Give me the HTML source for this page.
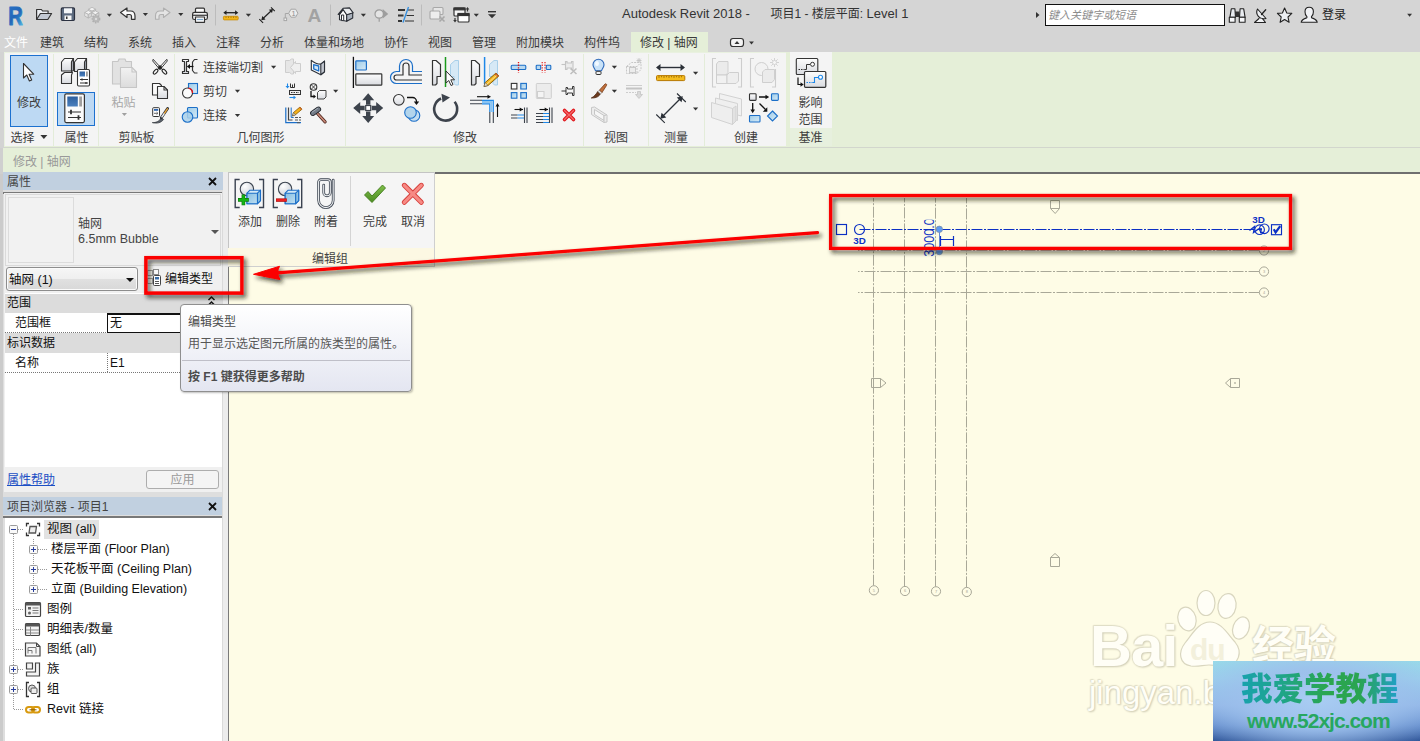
<!DOCTYPE html>
<html lang="zh-CN">
<head>
<meta charset="utf-8">
<title>Autodesk Revit 2018 - 项目1 - 楼层平面: Level 1</title>
<style>
html,body{margin:0;padding:0;}
body{width:1420px;height:741px;overflow:hidden;position:relative;background:#d5d5d5;
 font-family:"Liberation Sans","Noto Sans CJK SC",sans-serif;font-size:12px;color:#333;}
.abs{position:absolute;}
div,span,a{position:absolute;white-space:nowrap;box-sizing:border-box;}
svg{position:absolute;overflow:visible;}
/* ---------- title / tabs ---------- */
#titlebar{left:0;top:0;width:1420px;height:52px;background:#d5d5d5;}
.tab{top:34px;height:19px;line-height:19px;font-size:12px;color:#3a3a3a;}
#title{left:622px;top:5px;height:18px;line-height:18px;font-size:13px;color:#333;}
/* ---------- ribbon ---------- */
#ribbon{left:0;top:52px;width:1420px;height:96px;background:#e5efd8;}
.panel{top:0;height:95px;background:#f4f4f4;}
.ptitle{top:76px;height:19px;line-height:19px;text-align:center;font-size:12px;color:#444;}
.sep{top:2px;width:1px;height:92px;background:#dfe8d5;}
.rl{font-size:12px;color:#3c3c3c;height:16px;line-height:16px;}
.dd{width:0;height:0;border-left:3px solid transparent;border-right:3px solid transparent;border-top:3px solid #444;}
#optbar{left:0;top:148px;width:1420px;height:25px;background:#e5efd8;}
/* ---------- left panels ---------- */
.ptl{left:3px;width:220px;height:18px;background:#c1d0e0;line-height:18px;font-size:12px;color:#444;}
.row{left:5px;width:217px;}
.tl{height:18px;line-height:18px;font-size:12.5px;color:#111;}
#left span,#left a,#tip span,#egrp span{margin-top:1px;}
#left span.tl{margin-top:-1.500px;}
/* ---------- drawing ---------- */
#draw{left:229px;top:174px;width:1191px;height:567px;background:#fefce6;}
</style>
</head>
<body>
<!-- TITLE BAR -->
<div id="titlebar">
  <div id="title"><span id="t1" style="left:0;top:0;">Autodesk Revit 2018 -</span><span id="t2" style="left:148.500px;top:0;font-size:12px;">项目1 - 楼层平面: <span style="position:static;font-size:13px;">Level 1</span></span></div>
</div>
<!-- TABS -->
<div id="tabs" style="left:0;top:0;width:1420px;height:52px;">
  <div class="tab" style="left:4px;color:#fff;">文件</div>
  <div class="tab" style="left:40px;">建筑</div>
  <div class="tab" style="left:84px;">结构</div>
  <div class="tab" style="left:128px;">系统</div>
  <div class="tab" style="left:172px;">插入</div>
  <div class="tab" style="left:216px;">注释</div>
  <div class="tab" style="left:260px;">分析</div>
  <div class="tab" style="left:304px;">体量和场地</div>
  <div class="tab" style="left:384px;">协作</div>
  <div class="tab" style="left:428px;">视图</div>
  <div class="tab" style="left:472px;">管理</div>
  <div class="tab" style="left:516px;">附加模块</div>
  <div class="tab" style="left:584px;">构件坞</div>
  <div style="left:631px;top:32px;width:77px;height:20px;background:#e5efd8;"></div>
  <div class="tab" style="left:640px;">修改 | 轴网</div>
</div>
<svg id="qat" style="left:0;top:0;" width="1420" height="52" viewBox="0 0 1420 52"><defs><linearGradient id="rg" x1="0.200" y1="0" x2="0.800" y2="1"><stop offset="0" stop-color="#2a72c6"/><stop offset="0.500" stop-color="#2167b8"/><stop offset="0.750" stop-color="#2f86c8"/><stop offset="1" stop-color="#5cbcea"/></linearGradient></defs><text x="8.300" y="24.600" font-family="Liberation Sans, sans-serif" font-weight="bold" font-size="25.500" fill="url(#rg)" stroke="url(#rg)" stroke-width="0.900" stroke-linejoin="round" textLength="14.600" lengthAdjust="spacingAndGlyphs">R</text><g stroke="#333" stroke-width="1.200" stroke-linejoin="round"><path d="M36.600 19.500V9.500h4.800l1.200 1.500h5.500v2.500" fill="#eceff3"/><path d="M36.600 19.500l3.800-6h11.200l-3.800 6z" fill="#c3c9d3"/></g><g><rect x="61.300" y="7.900" width="13.200" height="12.600" rx="1.200" fill="#5d6b80" stroke="#2b3140" stroke-width="1.200"/><rect x="64" y="8.300" width="8" height="5" fill="#f3f5f8"/><rect x="64.500" y="15.500" width="7" height="4.500" fill="#f5f5f5"/><rect x="66" y="16.500" width="1.500" height="2.500" fill="#333"/></g><g stroke="#b2b2b2" stroke-width="0.800" stroke-linejoin="round"><path d="M92 7.3l3.6 1.980l-3.6 1.980l-3.6-1.980z" fill="#f2f2f2"/><path d="M88.4 9.28l3.6 1.980v3.6l-3.6-1.980z" fill="#e4e4e4"/><path d="M95.6 9.28l-3.6 1.980v3.6l3.6-1.980z" fill="#d6d6d6"/><path d="M88.3 10.5l3.6 1.980l-3.6 1.980l-3.6-1.980z" fill="#f2f2f2"/><path d="M84.7 12.48l3.6 1.980v3.6l-3.6-1.980z" fill="#e4e4e4"/><path d="M91.899 12.48l-3.6 1.980v3.6l3.6-1.980z" fill="#d6d6d6"/><path d="M95.3 10.8l3.6 1.980l-3.6 1.980l-3.6-1.980z" fill="#f2f2f2"/><path d="M91.7 12.780l3.6 1.980v3.6l-3.6-1.980z" fill="#e4e4e4"/><path d="M98.899 12.780l-3.6 1.980v3.6l3.6-1.980z" fill="#d6d6d6"/></g><g><circle cx="96" cy="19" r="3.600" fill="#b9b9b9" stroke="#b0b0b0" stroke-width="1.600" stroke-dasharray="1.400 1.200"/><circle cx="96" cy="19" r="1.200" fill="#dcdcdc"/></g><path d="M106.800 13.7h5.2l-2.6 3z" fill="#333"/><path d="M120.500 12.500l6.500-4.500v3h3.500c3 0 4.500 2 4.500 5v3.300h-3.500v-2.800c0-1.500-.5-2-2-2h-2.500v3z" fill="#fafafa" stroke="#333" stroke-width="1.200" stroke-linejoin="round"/><path d="M142.8 13.1h5.2l-2.6 3z" fill="#333"/><path d="M170 12.500l-6.500-4.500v3h-3.500c-3 0-4.500 2-4.500 5v3.300h3.500v-2.800c0-1.500.5-2 2-2h2.500v3z" fill="#e4e4e4" stroke="#b0b0b0" stroke-width="1.100" stroke-linejoin="round"/><path d="M178.200 13.1h5.2l-2.6 3z" fill="#333"/><g stroke="#333" stroke-width="1.200" stroke-linejoin="round"><rect x="195.500" y="8.200" width="9" height="5" rx="1" fill="#fafafa"/><rect x="192.600" y="12.300" width="14.800" height="7.200" rx="1.800" fill="#f1f1f1"/><rect x="195.500" y="17" width="9" height="5.300" fill="#fff"/></g><path d="M197 19.500h6" stroke="#7aa6cc" stroke-width="1.300"/><path d="M193 15.300h14" stroke="#444" stroke-width="1.300"/><path d="M215.500 4.500v21M330.500 4.500v21M421.500 4.500v21" stroke="#bcbcbc" stroke-width="1"/><g stroke="#222" stroke-width="1.300" fill="#222"><path d="M225 12.700h11.500"/><path d="M223.300 12.700l3.200-2.400v4.800zM238.300 12.700l-3.200-2.400v4.800z" stroke="none"/></g><rect x="223.400" y="16.300" width="14.800" height="3.600" rx="0.800" fill="#f2b41a" stroke="#c98a00" stroke-width="0.800"/><path d="M226 16.500v1.500M228.500 16.500v1.500M231 16.500v1.500M233.500 16.500v1.500M236 16.500v1.500" stroke="#8a5f00" stroke-width="0.600"/><path d="M245.8 13.7h5.2l-2.6 3z" fill="#333"/><g stroke="#222" stroke-width="1.200" fill="#222"><path d="M262.500 19l9.300-8.800"/><path d="M259.300 19.200l3.800 3.600M271 7.400l3.800 3.700" stroke-width="1.100"/><path d="M261.300 20.300l1-4.200l3.200 3.300zM273 8.900l-1 4.200l-3.200-3.300z" stroke="none"/></g><g stroke="#a6a6a6" stroke-width="1" fill="#e9e9e9"><path d="M285.300 18v-4.500h3.500" fill="none"/><rect x="284" y="18" width="2.600" height="2.600" fill="#f0f0f0"/><path d="M288.700 13.200l2.300-4h4.600l2.300 4l-2.300 4h-4.600z" fill="#ececec"/></g><text x="291.400" y="15.800" font-family="Liberation Sans, sans-serif" font-size="7.500" fill="#8e8e8e">1</text><text x="307.600" y="21.800" font-family="Liberation Sans, sans-serif" font-weight="bold" font-size="19" fill="#a2a2a2">A</text><g stroke="#2b2f36" stroke-width="1.100" stroke-linejoin="round"><path d="M339.500 14.300l3.700-4.800l3.500 5.200v6.600l-7.200-1.600z" fill="#fbfbfb"/><path d="M346.700 14.700l6-1.900v5.300l-6 3.200z" fill="#a9b1bc"/><path d="M338.200 14.400l4.900-6.100l6.400-.4l3.700 4.900l-6.500 2l-3.600-5.300l-3.600 4.800z" fill="#e9ebee"/><rect x="341.500" y="15" width="2.200" height="5.600" fill="#fff" stroke-width="1"/></g><path d="M360.799 13.7h5.2l-2.6 3z" fill="#333"/><g stroke="#9c9c9c" stroke-width="1.200" fill="#e4e4e4"><path d="M382.700 9l5.500 4.900l-5.500 4.700z" fill="#9e9e9e" stroke="none"/><circle cx="379.200" cy="14" r="4.200"/><path d="M379.200 18.200v3.500"/></g><g stroke="#333" stroke-width="2"><path d="M398 10h7M398 15.500h5.500M398 21h4"/></g><g stroke="#333" stroke-width="1"><path d="M408 10h6M406.500 15.500h7.500M405 21h9"/></g><path d="M408.500 7l-5.500 15.500" stroke="#2f8de0" stroke-width="1.300"/><g stroke="#a8a8a8" stroke-width="1.100" fill="#e6e6e6"><rect x="433" y="7.500" width="10" height="7" rx="1"/><rect x="430" y="11" width="10" height="8" rx="1" fill="#ededed"/><path d="M439.500 16.500l5 5M444.500 16.500l-5 5" stroke-width="1.600"/></g><g stroke="#333" stroke-width="1.200" fill="#f6f6f6"><rect x="454" y="8" width="11" height="8" rx="1"/><rect x="458" y="13.500" width="11" height="8.500" rx="1" fill="#fff"/><rect x="458" y="13.500" width="11" height="2" fill="#333"/><rect x="454" y="8" width="11" height="1.800" fill="#333"/><path d="M467.500 8.500v3M455 18v3" fill="none"/></g><path d="M467.500 7l-1.800 2.500h3.600zM455 22.500l-1.800-2.500h3.600z" fill="#333"/><path d="M473.7 13.7h5.2l-2.6 3z" fill="#333"/><path d="M488 11.700h8" stroke="#333" stroke-width="1.400"/><path d="M488 14.200h8l-4 4z" fill="#333"/><rect x="730.500" y="38.500" width="13" height="8" rx="2.500" fill="#f4f4f4" stroke="#333" stroke-width="1.200"/><path d="M734.500 44h5l-2.500-3z" fill="#333"/><path d="M749.1 41.5h4.8l-2.4 3z" fill="#333"/><path d="M1036 12l3.500 3l-3.500 3z" fill="#333"/><rect x="1045.500" y="4.500" width="179" height="21" fill="#fff" stroke="#111" stroke-width="1"/><g stroke="#222" stroke-width="1.100" stroke-linejoin="round"><path d="M1231.300 8.800h3.600l.6 8.500h-5.600z" fill="#e9ecf0"/><path d="M1229.300 17.300h5.800v5h-5.800z" fill="#f6f7f9"/><path d="M1240.100 8.800h3.600l1.400 8.500h-5.600z" fill="#e9ecf0"/><path d="M1239.300 17.300h5.800v5h-5.800z" fill="#f6f7f9"/><rect x="1235" y="11.500" width="4.400" height="5.500" fill="#333" stroke="none"/></g><g stroke="#222" stroke-width="1.100" stroke-linejoin="round" stroke-linecap="round"><path d="M1257.500 9c-2.500 5 2 11.500 8.500 9.500z" fill="#eef0f3"/><path d="M1261.500 14.500l4.200-4.800" fill="none" stroke-width="1.300"/><path d="M1259 18.500l-4.500 4h11l-3-3.800" fill="#f2f3f5"/></g><path d="M1284.600 8l2.200 5l5 .4l-3.800 3.600l1.100 5.300l-4.500-2.800l-4.500 2.800l1.100-5.300l-3.800-3.600l5-.4z" fill="#eceff3" stroke="#222" stroke-width="1.100" stroke-linejoin="round"/><g stroke="#222" stroke-width="1.100" stroke-linejoin="round"><path d="M1301.200 22.300c.3-2.800 2.600-3.400 5.300-4.400c.6-.3.600-1 .2-1.500c-1.200-1.200-1.700-2.800-1.700-4.600c0-2.700 1.600-4.500 4.200-4.500s4.200 1.800 4.200 4.500c0 1.800-.5 3.400-1.700 4.600c-.4.500-.4 1.200.2 1.500c2.700 1 5 1.600 5.300 4.400z" fill="#f1f2f5"/></g><path d="M1407.200 13.7h4.8l-2.4 3z" fill="#333"/></svg><span style="left:1048px;top:7px;height:16px;line-height:16px;font-size:11px;font-style:italic;color:#8c8c8c;">键入关键字或短语</span><span style="left:1322px;top:7px;height:16px;line-height:16px;font-size:12px;color:#222;">登录</span>
<!-- RIBBON -->
<div id="ribbon">
  <div class="panel" id="pmain" style="left:4px;width:782px;border-top:1px solid #e9f1e0;border-left:1px solid #e9f1e0;height:94px;"></div>
  <div class="panel" id="pdatum" style="left:790px;width:42px;height:94px;"></div>
  <div style="left:790px;top:76px;width:42px;height:18px;background:#e7f0de;"></div>
  <div style="left:0;top:0;width:4px;height:96px;background:#d3d3d3;z-index:5;"></div>
  <div style="left:0;top:96px;width:3px;height:26px;background:#cfcfcf;z-index:5;"></div>
  <div style="left:3px;top:95px;width:1417px;height:1px;background:#d2d6cd;"></div>
  <svg id="ribsvg" style="left:0;top:0;" width="832" height="96" viewBox="0 52 832 96"><defs>
<linearGradient id="gq" x1="0" y1="0" x2="0" y2="1"><stop offset="0" stop-color="#fdfdfd"/><stop offset="1" stop-color="#d9dbe0"/></linearGradient>
<linearGradient id="gb" x1="0" y1="0" x2="1" y2="1"><stop offset="0" stop-color="#9ccbe8"/><stop offset="1" stop-color="#d8ebf7"/></linearGradient>
<linearGradient id="gd" x1="0" y1="0" x2="0" y2="1"><stop offset="0" stop-color="#f2f2f2"/><stop offset="1" stop-color="#dcdcdc"/></linearGradient>
<linearGradient id="gn" x1="0" y1="0" x2="0" y2="1"><stop offset="0" stop-color="#2d5f9e"/><stop offset="1" stop-color="#4b80bd"/></linearGradient>
</defs><path d="M53.5 54V146" stroke="#e3ecd9" stroke-width="1"/><path d="M98.5 54V146" stroke="#e3ecd9" stroke-width="1"/><path d="M174.5 54V146" stroke="#e3ecd9" stroke-width="1"/><path d="M345.5 54V146" stroke="#e3ecd9" stroke-width="1"/><path d="M583.5 54V146" stroke="#e3ecd9" stroke-width="1"/><path d="M648.5 54V146" stroke="#e3ecd9" stroke-width="1"/><path d="M704.5 54V146" stroke="#e3ecd9" stroke-width="1"/><rect x="10.500" y="55.500" width="37" height="71" fill="#bdd9f3" stroke="#1c71cf" stroke-width="1"/><path d="M23.500 63.500v14.500l3.300-3l2.600 6l2.300-1l-2.600-5.800h4.600z" fill="#fff" stroke="#333" stroke-width="1.100" stroke-linejoin="round"/><path d="M40.4 135.0h7.0l-3.5 4z" fill="#333"/><g stroke="#333" stroke-width="1.100" stroke-linejoin="round"><path d="M61.500 62l3-3.500h9l-2 3.500v9h-10z" fill="url(#gq)"/><path d="M74.500 62l3-3.500h9v10l-2 3h-10z" fill="url(#gq)"/><path d="M86.500 58.500v10l-2 3v-9.500z" fill="#9aa0aa"/><path d="M61.500 75l3-2.500h8l-1 2.500v8.500h-10z" fill="url(#gq)"/><path d="M71.500 62l2-3.500v12l-2 1z" fill="#aeb3bc"/><rect x="77.500" y="69.500" width="12" height="16.500" rx="1.200" fill="#fff"/></g><rect x="79.500" y="71.500" width="5.500" height="5" fill="url(#gn)"/><rect x="86" y="71.500" width="1.800" height="5" fill="#9a9a9a"/><path d="M80 79.500h8M80 83h8" stroke="#333" stroke-width="1"/><path d="M82 78.500v2M86 82v2" stroke="#333" stroke-width="1.300"/><rect x="57.500" y="92.500" width="37" height="33" fill="#bdd9f3" stroke="#1c71cf" stroke-width="1"/><rect x="64.800" y="93.800" width="19.600" height="28.800" rx="1.500" fill="#fbfbfb" stroke="#333" stroke-width="1.200"/><rect x="67.300" y="96.500" width="10.500" height="10" fill="url(#gn)"/><rect x="79.200" y="96.500" width="2.800" height="10" fill="#a0a0a0"/><path d="M68 112h13M68 117.500h13" stroke="#333" stroke-width="1.100"/><path d="M71 109.800v4.400M78.500 115.300v4.400" stroke="#333" stroke-width="1.800"/><g stroke="#c6c6c6" stroke-width="1.100" stroke-linejoin="round"><path d="M112.500 61.500h5.500l1-2.500h6l1 2.500h5.500v22.500h-19z" fill="#e2e2e2"/><path d="M120.500 67.500h11.500l4.500 4.500v15.500h-16z" fill="url(#gd)"/><path d="M132 67.500v4.500h4.500" fill="none"/></g><path d="M121.800 113.0h5.2l-2.6 3z" fill="#a0a0a0"/><g stroke="#222" stroke-width="0.900" stroke-linejoin="round"><path d="M153.200 59.300l8.400 9.300l-2 .6l-6.900-8.200z" fill="#fdfdfd"/><path d="M166.800 59.300l-8.400 9.300l2 .6l6.900-8.200z" fill="#fdfdfd"/><ellipse cx="155.600" cy="71.700" rx="1.500" ry="3" transform="rotate(42 155.600 71.700)" fill="#f6f6f6" stroke-width="1.100"/><ellipse cx="164.400" cy="71.700" rx="1.500" ry="3" transform="rotate(-42 164.400 71.700)" fill="#f6f6f6" stroke-width="1.100"/><circle cx="160" cy="67.300" r="1.500" fill="#222"/></g><g stroke="#333" stroke-width="1.100" stroke-linejoin="round"><path d="M152.500 83.500h7l2 2v9.500h-9z" fill="#fafafa"/><path d="M157.500 86.500h6.500l3.500 3.500v8.500h-10z" fill="url(#gq)"/><path d="M164 86.500v3.500h3.500" fill="none"/></g><rect x="152.700" y="107.700" width="6.800" height="8.800" rx="0.800" fill="#fff" stroke="#333" stroke-width="1"/><rect x="154" y="109" width="4.200" height="1.800" fill="#2f66b0"/><path d="M154 113.300h3.500" stroke="#444" stroke-width="0.800"/><path d="M156.500 112l1.500 1.300l-1.500 1.300" stroke="#444" stroke-width="0.700" fill="none"/><path d="M152.300 122.600c3.500 .2 7-1.200 9-4.800l2.300 1.700c-2.500 3.300-6.500 4.300-11.300 3.100z" fill="#5a616b" stroke="#2a2e34" stroke-width="0.700"/><path d="M161.300 117.800l6.300-9.300" stroke="#2a2e34" stroke-width="2.800" stroke-linecap="round"/><path d="M161.600 117.400l3-4.400" stroke="#eef0f2" stroke-width="1.400"/><path d="M164.600 113l2.800-4.200" stroke="#e9a53c" stroke-width="1.400" stroke-linecap="round"/><g stroke="#333" stroke-width="1.200" fill="url(#gq)" stroke-linejoin="round"><path d="M182.500 59.500h6v2h-2v10h2v2h-6v-2h2v-10h-2z"/><path d="M197.500 59.500h-3l-2 2.500v8.500l2 2.500h3" fill="none"/></g><path d="M187.500 66.500h6" stroke="#111" stroke-width="1.200"/><path d="M187 66.500l3-2.500v5z" fill="#111"/><path d="M271.0 65.8h5.2l-2.6 3z" fill="#333"/><rect x="188.500" y="83.500" width="9" height="10" fill="url(#gb)" stroke="#1c6fc8" stroke-width="1.100"/><circle cx="187.500" cy="93" r="5" fill="#fbfbfb" stroke="#333" stroke-width="1.100"/><path d="M188.500 88.100a5 5 0 0 1 4 4.900" stroke="#e8121a" stroke-width="1.300" fill="none"/><path d="M234.9 89.7h5.2l-2.6 3z" fill="#333"/><rect x="187.500" y="107.500" width="10" height="10.500" rx="1" fill="url(#gb)" stroke="#1c6fc8" stroke-width="1.100"/><circle cx="187.500" cy="117" r="5.300" fill="#a9d0ea" fill-opacity="0.850" stroke="#1c6fc8" stroke-width="1.100"/><path d="M234.9 113.9h5.2l-2.6 3z" fill="#333"/><g stroke="#cdcdcd" stroke-width="1" fill="#e6e6e6" stroke-linejoin="round"><path d="M285.500 60.500h4l2-1.500h2v15h-2l-2-1.500h-4z"/><path d="M300.500 63.500v8h-5v2l-5-6l5-6v2z" fill="#efefef"/></g><g stroke="#2b3038" stroke-width="1.100" stroke-linejoin="round"><path d="M311.300 60.300q4.500 3.800 9.500 3.800l3.700-2.900v10.500l-3.700 3l-9.500-4.700z" fill="#f7f7f8"/><path d="M320.800 64.100l3.700-2.900v10.500l-3.700 3z" fill="#c2c7d0"/></g><path d="M313.700 64.600l5 1.400v5l-5-2.200z" fill="#cfe6f8" stroke="#1c6fc8" stroke-width="1.300" stroke-linejoin="round"/><g stroke="#333" stroke-width="1"><path d="M290.500 83.500v4h4v-4M292.500 84.500v3" fill="none"/><rect x="289.500" y="90.500" width="11" height="4" fill="#eee"/><path d="M291 92.500h8" stroke-dasharray="1.500 1"/></g><path d="M287.500 83.500v4" stroke="#1e88e8" stroke-width="1.100"/><path d="M285.500 86l2 2.500l2-2.500z" fill="#1e88e8"/><path d="M289.500 97.500h5" stroke="#1e88e8" stroke-width="1.100"/><path d="M293.500 95.500l2.500 2l-2.500 2z" fill="#1e88e8"/><g stroke="#333" stroke-width="1.100" fill="none"><circle cx="313.500" cy="87" r="3.300"/><path d="M311.200 84.700l4.600 4.600M315.800 84.700l-4.600 4.600" stroke-width="0.900"/><path d="M311 91v5.500h3" stroke="#111" stroke-width="1.300"/></g><path d="M313.500 94.500l2.500 2l-2.500 2z" fill="#111"/><path d="M317.500 92.500l2-2h6.500v6.500l-2 2h-6.500z" fill="url(#gq)" stroke="#444" stroke-width="1"/><path d="M333.099 89.7h5.2l-2.6 3z" fill="#333"/><path d="M285.800 107.500v15.200h15.200" stroke="#1c6fc8" stroke-width="1.200" fill="none"/><path d="M288.500 107.500v12.500h4" stroke="#444" stroke-width="1.200" fill="none"/><path d="M291.200 107.500v10h2.500" stroke="#1c6fc8" stroke-width="1" fill="none"/><path d="M295 117.500h6M295 120h6M297 122.700h4" stroke="#555" stroke-width="1" stroke-dasharray="3 1"/><path d="M292.500 116l1-3.500l6.500-5.500l2 2.200l-6.500 5.500z" fill="#f4b21c" stroke="#8a5a00" stroke-width="0.800" stroke-linejoin="round"/><path d="M292.500 116l1-3.500l2 2.200z" fill="#f3e2c0" stroke="#555" stroke-width="0.600"/><path d="M299 107.800l1-.8l2 2.200l-1 .8z" fill="#d06a30"/><g stroke-linecap="round"><path d="M317.300 113.300l7.800 8.600" stroke="#4a241c" stroke-width="3.200"/><path d="M317.300 113.300l7.800 8.600" stroke="#c98a78" stroke-width="1.600"/></g><g><path d="M312.800 113.200l5.600-3.900" stroke="#23272d" stroke-width="5.400" stroke-linecap="round"/><path d="M312.800 113.200l5.600-3.900" stroke="#727b87" stroke-width="3.800" stroke-linecap="round"/><path d="M312.300 112.100l5.400-3.800" stroke="#a3abb6" stroke-width="1" stroke-linecap="round"/></g><path d="M353.400 56.800V88" stroke="#111" stroke-width="1.300"/><rect x="355.800" y="60.800" width="10.600" height="9.200" rx="0.800" fill="url(#gb)" stroke="#1c6fc8" stroke-width="1.200"/><rect x="355.800" y="73.800" width="26" height="11.400" rx="0.800" fill="url(#gq)" stroke="#333" stroke-width="1.200"/><path d="M422 71.500h-9.500v-5.500a6.500 6.500 0 0 0 -13 0v5.500h-3a4.500 4.500 0 0 0 0 12h25.500" fill="none" stroke="#1c6fc8" stroke-width="1.200"/><path d="M422 75h-13v-9a3 3 0 0 0 -6 0v9h-6.500a1.800 1.800 0 0 0 0 5h25.500" fill="none" stroke="#333" stroke-width="1.200"/><path d="M432.500 60.500h3.500l4.500 4v12h-3.500v7l-1.500 1.500h-3z" fill="url(#gq)" stroke="#333" stroke-width="1.200" stroke-linejoin="round"/><path d="M458.500 60.500h-3.500l-4.500 4v12h3.500v7l1.500 1.500h3z" fill="#d6e9f6" stroke="#a8cfe9" stroke-width="1" stroke-linejoin="round"/><path d="M445.500 57V87" stroke="#1a9a1a" stroke-width="1.500"/><path d="M446 71v12l2.800-2.500l2.200 5l2-.9l-2.200-4.800h3.700z" fill="#fff" stroke="#333" stroke-width="1" stroke-linejoin="round"/><path d="M471.500 60.500h3.500l4.500 4v12h-3.500v7l-1.500 1.500h-3z" fill="url(#gq)" stroke="#333" stroke-width="1.200" stroke-linejoin="round"/><path d="M497.500 60.500h-3.500l-4.500 4v12h3.500v7l1.500 1.500h3z" fill="#d6e9f6" stroke="#a8cfe9" stroke-width="1" stroke-linejoin="round"/><path d="M484.600 57V84" stroke="#1e88e8" stroke-width="1.500"/><path d="M484 86.500l1.200-4l10.800-9.500l2.800 3l-10.800 9.500z" fill="#f6b820" stroke="#7a5200" stroke-width="0.900" stroke-linejoin="round"/><path d="M484 86.500l1.200-4l2.800 3z" fill="#f3e6cc" stroke="#555" stroke-width="0.600"/><path d="M494.500 74.200l1.500-1.300l2.800 3l-1.500 1.300z" fill="#c8622a"/><path d="M487 84l9.500-8.500" stroke="#fde9a8" stroke-width="0.800"/><g fill="#3d434c"><path d="M368.200 93.200l6 7h-3.800v4.500h-4.400v-4.500h-3.800z"/><path d="M368.200 122.900l6-7h-3.800v-4.500h-4.400v4.500h-3.800z"/><path d="M353.200 108l7-6v3.800h4.500v4.400h-4.500v3.800z"/><path d="M383.200 108l-7-6v3.800h-4.500v4.400h4.500v3.800z"/></g><rect x="365.700" y="105.500" width="5" height="5" fill="#fff" stroke="#3d434c" stroke-width="1.200"/><circle cx="398.800" cy="99.800" r="5.300" fill="url(#gq)" stroke="#333" stroke-width="1.100"/><circle cx="414" cy="115.500" r="5.800" fill="#c4def0" stroke="#1c6fc8" stroke-width="1.100"/><circle cx="410.500" cy="112.500" r="5.800" fill="#b3d5ec" stroke="#1c6fc8" stroke-width="1.100"/><path d="M407 97.500h5.500a4 4 0 0 1 4 4v1.500" fill="none" stroke="#111" stroke-width="1.300"/><path d="M413.800 101.500h5.400l-2.700 3.500z" fill="#111"/><path d="M454.600 101.800a11.500 11.500 0 1 1 -13.500 -3.300" fill="none" stroke="#3d434c" stroke-width="2.600"/><path d="M441.500 93.800l8.500 3.800l-7.500 5z" fill="#3d434c"/><path d="M470 100.300h12M470 103.800h12" stroke="#3d434c" stroke-width="1.100"/><path d="M489.800 123v-11M493.300 123v-11" stroke="#3d434c" stroke-width="1.100"/><path d="M482 100.300h11.300v11.700M482 103.800h7.800v8.200" stroke="#1e88e8" stroke-width="1.200" fill="none"/><path d="M482 102h9.500v10" stroke="#8cc4f0" stroke-width="2.200" fill="none"/><path d="M477 96.700h12" stroke="#111" stroke-width="1.100"/><path d="M487.500 94.700l3.500 2l-3.500 2z" fill="#111"/><path d="M497.500 117v-12" stroke="#111" stroke-width="1.100"/><path d="M495.500 106.500l2-3.500l2 3.500z" fill="#111"/><rect x="511.200" y="65.300" width="14.600" height="4.200" rx="1" fill="#b9d9f0" stroke="#1c6fc8" stroke-width="1.100"/><path d="M518.500 62v11" stroke="#e01010" stroke-width="1.300" stroke-dasharray="1.300 1.300"/><rect x="536.200" y="65.300" width="4.500" height="4.200" rx="0.800" fill="#b9d9f0" stroke="#1c6fc8" stroke-width="1.100"/><rect x="546.300" y="65.300" width="4.500" height="4.200" rx="0.800" fill="#b9d9f0" stroke="#1c6fc8" stroke-width="1.100"/><path d="M542.200 62v11M545 62v11" stroke="#e01010" stroke-width="1.100" stroke-dasharray="1.300 1.300"/><g stroke="#c4c4c4" stroke-width="1.100" fill="#ececec"><path d="M561.500 64.500h4"/><path d="M565.500 61.500h1.500v1.500h4.500v-1.500h1.500v8h-1.500v-1.500h-4.500v1.500h-1.500z"/><path d="M570.500 68.500l6 5.500M576.500 68.500l-6 5.500" stroke-width="1.500" stroke="#bdbdbd"/></g><rect x="511.300" y="83.400" width="5.600" height="5.600" fill="#fafafa" stroke="#333" stroke-width="1.100"/><rect x="520.800" y="83.400" width="5.600" height="5.600" fill="url(#gb)" stroke="#1c6fc8" stroke-width="1.100"/><rect x="511.300" y="92.600" width="5.600" height="5.600" fill="url(#gb)" stroke="#1c6fc8" stroke-width="1.100"/><rect x="520.800" y="92.600" width="5.600" height="5.600" fill="url(#gb)" stroke="#1c6fc8" stroke-width="1.100"/><rect x="536.300" y="83.500" width="15" height="15" rx="0.800" fill="#ececec" stroke="#cfcfcf" stroke-width="1"/><rect x="537.500" y="91.500" width="6.500" height="6" fill="#f4f4f4" stroke="#cfcfcf" stroke-width="1"/><g stroke="#222" stroke-width="0.900" fill="#f8f8f8"><path d="M561.500 91h4.500"/><path d="M566 87.500h1.500v1.500h5v-2.500h1.500v9h-1.500v-2.500h-5v1.500h-1.500z"/></g><path d="M514.500 109.500h8.500" stroke="#111" stroke-width="1.100"/><path d="M519.700 107.500l3.300 2l-3.300 2z" fill="#111"/><path d="M511 115h6.500M511 118h6.500" stroke="#3d434c" stroke-width="1.100"/><path d="M517.500 115h7M517.500 118h7" stroke="#1e88e8" stroke-width="1.200"/><path d="M524.500 107.500v15.500M527 107.500v15.500" stroke="#3d434c" stroke-width="1.100"/><path d="M539.500 109.500h8.500" stroke="#111" stroke-width="1.100"/><path d="M544.700 107.500l3.300 2l-3.300 2z" fill="#111"/><path d="M536 113.500h7M536 116.500h7M536 119.500h7M536 122.500h7" stroke="#3d434c" stroke-width="1.100"/><path d="M543 113.500h6.500M543 116.500h6.500M543 119.500h6.500M543 122.500h6.500" stroke="#1e88e8" stroke-width="1.200"/><path d="M549.500 107.500v15.500M552 107.500v15.500" stroke="#3d434c" stroke-width="1.100"/><path d="M564.500 110.500l9 9M573.500 110.500l-9 9" stroke="#e0161c" stroke-width="3.600" stroke-linecap="round"/><path d="M564.500 110.500l9 9M573.500 110.500l-9 9" stroke="#f56a6a" stroke-width="1.400" stroke-linecap="round"/><path d="M598.500 59.300a5.500 5.500 0 0 1 5.500 5.500c0 2.500-1.800 3.500-2.500 6h-6c-.7-2.500-2.500-3.500-2.500-6a5.500 5.500 0 0 1 5.500-5.500z" fill="#c9e2f8" stroke="#2a66b8" stroke-width="1.100"/><ellipse cx="597" cy="63.500" rx="2" ry="2.500" fill="#f2f9ff"/><rect x="596" y="71.300" width="5" height="3.200" rx="0.800" fill="#f0f0f0" stroke="#333" stroke-width="1"/><path d="M611.8 65.8h5.2l-2.6 3z" fill="#333"/><g stroke="#c6c6c6" stroke-width="1" fill="none" stroke-dasharray="2 1"><path d="M626.500 66.500l5-4h9.500l-4 4z"/><path d="M626.500 66.500v7h10.500v-7M637 73.500l4-4v-7"/></g><rect x="629.500" y="67.500" width="6" height="5" fill="#ececec" stroke="#c9c9c9"/><path d="M639 58v5M636.500 60.500h5M637.200 58.700l3.600 3.600M640.800 58.700l-3.600 3.600" stroke="#c4c4c4" stroke-width="0.900"/><path d="M591.300 98c3.500 0 7-.5 9-4l-2.500-2.500c-2 3-3.500 5-6.500 6.500z" fill="#6b3a1e" stroke="#4a2510" stroke-width="0.800"/><path d="M598 91.500l2.500 2.500l1.500-1.500l-2.500-2.500z" fill="#e8e8e8" stroke="#777" stroke-width="0.600"/><path d="M599.500 90l5.500-6c.8-.8 2.300.5 1.500 1.500l-4.500 7z" fill="#c0703c" stroke="#7a3e1a" stroke-width="0.800"/><path d="M611.8 89.7h5.2l-2.6 3z" fill="#333"/><path d="M626 85.500h16" stroke="#cdcdcd" stroke-width="1"/><path d="M626 88.500h16" stroke="#c4c4c4" stroke-width="2"/><path d="M626 92.500h10" stroke="#cdcdcd" stroke-width="1" stroke-dasharray="2 1"/><path d="M637.500 91.500h3v3h2l-3.500 4l-3.500-4h2z" fill="#d9d9d9" stroke="#c4c4c4" stroke-width="0.800"/><g stroke="#c6c6c6" stroke-width="1" fill="#ececec" stroke-linejoin="round"><path d="M591.500 107.500l3-0.500l12.500 8v7l-3 .5l-12.500-8z"/><path d="M594.500 109.500l9.500 6v5l-9.500-6z" fill="#f6f6f6"/><path d="M604 122.500v-7l3-.5"/></g><path d="M658.500 67.500h24" stroke="#2b3038" stroke-width="1.400"/><path d="M656 67.500l4.500-3.600v7.200zM685 67.500l-4.500-3.600v7.200z" fill="#2b3038"/><rect x="656.500" y="75.600" width="28.300" height="5" rx="1" fill="#f4bc1e" stroke="#b87800" stroke-width="1"/><path d="M659 76v2M661.500 76v1.300M664 76v2M666.500 76v1.300M669 76v2M671.500 76v1.300M674 76v2M676.500 76v1.300M679 76v2M681.500 76v1.300" stroke="#7a5000" stroke-width="0.600"/><path d="M693.0 71.7h5.2l-2.6 3z" fill="#333"/><path d="M662 117l19-19" stroke="#2b3038" stroke-width="1.300"/><path d="M656.300 114.500l8.500 8.300M677 93.500l8.800 8.500" stroke="#2b3038" stroke-width="1.100"/><path d="M660.300 118.800l1.300-6l4.700 4.700zM682.800 96.200l-1.300 6l-4.700-4.700z" fill="#2b3038"/><path d="M693.0 107.5h5.2l-2.6 3z" fill="#333"/><g stroke="#cdcdcd" stroke-width="1.100" fill="none"><path d="M716 58.500h-3.500v28.500h3.500M738 58.500h3.500v28.500h-3.500"/></g><g stroke="#cfcfcf" stroke-width="1" fill="#ebebeb" stroke-linejoin="round"><path d="M716.500 64l2-2.500h9.500v11l-2 2.500h-9.500z"/><path d="M716.500 75h10.500v8.500h-10.500z" fill="#f1f1f1"/><path d="M727 75l2.500-2.500h9v8.500l-2.500 2.500h-9z" fill="#eeeeee"/></g><g stroke="#cdcdcd" stroke-width="1.100" fill="none"><path d="M754 58.500h-3.500v28.500h3.500M775.500 69v18h-3.500"/></g><circle cx="761.500" cy="69" r="6.500" fill="#f2f2f2" stroke="#cfcfcf"/><g stroke="#cfcfcf" stroke-width="1" fill="#ebebeb" stroke-linejoin="round"><path d="M762.500 72l2.500-2.500h9.500v10l-2.500 3h-9.500z"/></g><path d="M774.500 58v9M770 62.500h9M771.300 59.300l6.400 6.400M777.700 59.300l-6.400 6.400" stroke="#cfcfcf" stroke-width="0.900"/><circle cx="774.500" cy="62.500" r="2" fill="#f6f6f6" stroke="#cfcfcf" stroke-width="0.800"/><g stroke="#d2d2d2" stroke-width="1" fill="#ededed" stroke-linejoin="round"><path d="M719.500 93.500l22 5.500v17l-22-5.500z" fill="#f1f1f1"/><path d="M715.500 98l22 5.500v17l-22-5.500z" fill="#efefef"/><path d="M711.500 102.500l21 6v16l-21-7z" fill="#eeeeee"/><path d="M732.500 108.500l3.500-2.500v15l-3.500 3.500z" fill="#e2e2e2"/></g><rect x="749.500" y="93.800" width="6.600" height="6.600" rx="0.800" fill="url(#gq)" stroke="#333" stroke-width="1.100"/><rect x="771.500" y="93.800" width="6.800" height="6.600" rx="0.800" fill="url(#gb)" stroke="#1c6fc8" stroke-width="1.100"/><rect x="749.500" y="115.500" width="10.500" height="6.500" rx="0.800" fill="url(#gb)" stroke="#1c6fc8" stroke-width="1.100"/><path d="M772.500 111l5 5l-5 5l-5-5z" fill="url(#gb)" stroke="#1c6fc8" stroke-width="1.100"/><g stroke="#111" stroke-width="1.300"><path d="M759 97h7.500M752.700 103v8M759.500 103.500l6 6"/></g><path d="M765.500 94.700l3.700 2.300l-3.700 2.300zM750.400 109.500h4.600l-2.300 3.700zM767.300 107.300v4.500h-4.500z" fill="#111"/><rect x="796.300" y="58.500" width="21.500" height="16" rx="1" fill="url(#gq)" stroke="#333" stroke-width="1.100"/><path d="M798.500 69.500h6" stroke="#333" stroke-width="1" stroke-dasharray="1.500 1"/><path d="M804.500 69.500h2v-5h3.500" fill="none" stroke="#333" stroke-width="1"/><circle cx="812.500" cy="64.300" r="2" fill="#fff" stroke="#333" stroke-width="1"/><rect x="804.500" y="71.500" width="21.300" height="15.800" rx="1" fill="url(#gq)" stroke="#333" stroke-width="1.200"/><path d="M806.500 82.500h6" stroke="#1e88e8" stroke-width="1.100" stroke-dasharray="1.500 1"/><path d="M812.500 82.500h2v-5h3.500" fill="none" stroke="#1e88e8" stroke-width="1.100"/><circle cx="820.500" cy="77.300" r="2" fill="#fff" stroke="#1e88e8" stroke-width="1.100"/><path d="M798 77.500v7h4" fill="none" stroke="#111" stroke-width="1.200"/><path d="M800.500 82.200l3.200 2.300l-3.200 2.300z" fill="#111"/></svg><span class="rl" style="left:17px;top:42.5px;color:#3c3c3c;">修改</span><span class="rl" style="left:10.5px;top:77.699px;color:#3c3c3c;">选择</span><span class="rl" style="left:64.5px;top:77.699px;color:#3c3c3c;">属性</span><span class="rl" style="left:111.5px;top:42.5px;color:#a8a8a8;">粘贴</span><span class="rl" style="left:118.5px;top:77.699px;color:#3c3c3c;">剪贴板</span><span class="rl" style="left:203px;top:8.299px;color:#3c3c3c;">连接端切割</span><span class="rl" style="left:203px;top:32.2px;color:#3c3c3c;">剪切</span><span class="rl" style="left:203px;top:56.400px;color:#3c3c3c;">连接</span><span class="rl" style="left:236.5px;top:77.699px;color:#3c3c3c;">几何图形</span><span class="rl" style="left:453px;top:77.699px;color:#3c3c3c;">修改</span><span class="rl" style="left:604px;top:77.699px;color:#3c3c3c;">视图</span><span class="rl" style="left:664px;top:77.699px;color:#3c3c3c;">测量</span><span class="rl" style="left:734px;top:77.699px;color:#3c3c3c;">创建</span><span class="rl" style="left:798.5px;top:42.5px;color:#3c3c3c;">影响</span><span class="rl" style="left:798.5px;top:59.8px;color:#3c3c3c;">范围</span><span class="rl" style="left:798.5px;top:77.699px;color:#3c3c3c;">基准</span>
</div>
<div id="optbar"><span style="left:13px;top:6px;height:16px;line-height:16px;color:#999;">修改 | 轴网</span></div>
<!-- DRAWING AREA -->
<div id="draw"></div>
<svg id="cad" style="left:0;top:0;" width="1420" height="741" viewBox="0 0 1420 741"><defs><filter id="sh" x="-5%" y="-20%" width="112%" height="150%"><feDropShadow dx="2.500" dy="3" stdDeviation="2" flood-color="#1a1a10" flood-opacity="0.750"/></filter></defs><g stroke="#a9a898" stroke-width="1" fill="none" stroke-dasharray="11 1.500 2 1.500"><path d="M873.5 585.7V198"/><path d="M904.5 586.4V198"/><path d="M935.5 586.7V198"/><path d="M966.5 587.4V198"/><path d="M1259.500 250.5H858"/><path d="M1259.500 271.5H858"/><path d="M1259.500 292.5H858"/></g><g stroke="#a9a898" stroke-width="1" fill="#fefce6"><circle cx="873.9" cy="590.3" r="4.600"/><circle cx="905" cy="591" r="4.600"/><circle cx="936" cy="591.3" r="4.600"/><circle cx="966.8" cy="592" r="4.600"/><circle cx="1264" cy="250.5" r="4.600"/><circle cx="1264" cy="271.5" r="4.600"/><circle cx="1264" cy="292.5" r="4.600"/></g><g font-family="Liberation Sans, sans-serif" font-size="4" fill="#a9a898" text-anchor="middle"><text x="873.9" y="591.5">5</text><text x="905" y="592.3">6</text><text x="936" y="592.6">7</text><text x="966.8" y="593.3">8</text><text x="1264" y="251.8">2</text><text x="1264" y="272.8">3</text><text x="1264" y="293.8">4</text></g><g stroke="#a9a898" stroke-width="1" fill="none"><path d="M1050.500 200.500h9v8h-9zM1050.500 208.500l4.700 5l4.300-5"/><path d="M1050.500 557.500h9v9h-9zM1050.500 557.500l4.500-4l4.500 4"/><path d="M871.500 378.500h9v9h-9zM873.500 378.500v9M880.500 378.500l5.500 4.500l-5.500 4.500"/><path d="M1230.500 378.500h9v9h-9zM1230.500 378.500l-5 4.500l5 4.500"/><circle cx="1235" cy="383" r="0.500"/></g><g stroke="#0c30c4" fill="none" stroke-width="1.150"><path d="M859.500 229.500H1256" stroke-dasharray="11 1.500 2 1.500" stroke-width="1.100"/><rect x="836.500" y="224.500" width="10" height="10"/><circle cx="859.500" cy="229.500" r="5"/><circle cx="1259.600" cy="229.700" r="4.800"/><circle cx="1264.300" cy="228.800" r="4.800"/><path d="M1249.500 230.500l5-4l-1 6l5-3.500l3.500 .5" stroke-width="1.300"/><path d="M1261 228v3.500M1263 232.500h-3" stroke-width="1.300"/><rect x="1271.500" y="224.700" width="10" height="10"/><path d="M1273.800 229.300l1.800 3.200l4.600-6.300" stroke-width="2.200"/><path d="M940.500 236v10M953.500 236v10M940.500 239.500h13" stroke-width="1.200"/><path d="M939.500 230v21" stroke="#5f86d8" stroke-width="1"/></g><circle cx="939.300" cy="229.300" r="3.200" fill="#5f9bf0" stroke="#7f8fa8" stroke-width="0.800"/><circle cx="939.300" cy="251.500" r="3.200" fill="#5f9bf0" stroke="#7f8fa8" stroke-width="0.800"/><g font-family="Liberation Sans, sans-serif" font-weight="bold" font-size="9.800" fill="#0c30c4"><text x="853.300" y="244">3D</text><text x="1252.300" y="223.200">3D</text></g><clipPath id="cdim"><rect x="915" y="219.800" width="30" height="45"/></clipPath><g clip-path="url(#cdim)"><text transform="translate(934 256.800) rotate(-90) scale(0.840 1)" font-family="Liberation Sans, sans-serif" font-size="15" fill="#0c30c4">3000.0</text></g></svg>
<!-- LEFT PANELS -->
<div id="left" style="left:0;top:172px;width:229px;height:569px;background:#dedede;">
  <div style="left:0;top:0;width:3px;height:569px;background:#cbcbcb;"></div>
  <!-- Properties palette -->
  <div class="ptl" style="top:0;"><span style="left:4px;top:0;">属性</span>
    <svg style="left:205px;top:5px;" width="9" height="9" viewBox="0 0 9 9"><path d="M1 1 L8 8 M8 1 L1 8" stroke="#111" stroke-width="1.8" fill="none"/></svg></div>
  <div style="left:3px;top:20px;width:219px;height:2px;background:#787878;"></div>
  <div style="left:4px;top:21px;width:218px;height:299px;background:#f0f0f0;"></div>
  <!-- type selector -->
  <div style="left:5px;top:22px;width:216px;height:72px;border:1px solid #dadada;background:#f1f1f1;"></div>
  <div style="left:8px;top:25px;width:66px;height:66px;border:1px solid #dcdcdc;background:#f2f2f2;"></div>
  <span style="left:78px;top:42.500px;height:16px;line-height:16px;color:#444;">轴网</span>
  <span style="left:78px;top:57.500px;height:16px;line-height:16px;color:#444;font-size:12.500px;">6.5mm Bubble</span>
  <div class="dd" style="left:211px;top:58px;border-left-width:4px;border-right-width:4px;border-top:4px solid #555;"></div>
  <!-- instance combo -->
  <div style="left:6px;top:95px;width:132px;height:24px;border:1px solid #8d8d8d;border-radius:3px;background:linear-gradient(#f6f6f6 0%,#efefef 48%,#e0e0e0 52%,#d8d8d8 100%);box-shadow:inset 0 0 0 1px #fbfbfb;"></div>
  <span style="left:9px;top:99px;height:16px;line-height:16px;color:#111;font-size:12.5px;">轴网 (1)</span>
  <div class="dd" style="left:126px;top:106px;border-left-width:4px;border-right-width:4px;border-top:4px solid #111;"></div>
  <!-- edit type -->
  <svg style="left:147px;top:97px;" width="14" height="17" viewBox="0 0 14 17">
    <rect x="0.5" y="1.5" width="5" height="5" fill="#f4f4f4" stroke="#9a9a9a"/><rect x="0.5" y="9.500" width="5" height="5" fill="#f4f4f4" stroke="#9a9a9a"/>
    <rect x="6.500" y="0.500" width="5" height="5" fill="#f8f8f8" stroke="#8a8a8a"/>
    <rect x="6.500" y="6.500" width="7" height="10" rx="1" fill="#fff" stroke="#444"/><rect x="8" y="8" width="4" height="2.500" fill="#3a6ea8"/><path d="M8 12.500h4M8 14.500h4" stroke="#555" stroke-width="1"/>
  </svg>
  <span style="left:165px;top:98px;height:16px;line-height:16px;color:#111;">编辑类型</span>
  <!-- property grid -->
  <div style="left:5px;top:121px;width:217px;height:174px;background:#fff;"></div>
  <div class="row" style="top:122px;height:19px;background:#dcdcdc;"><span style="left:2px;top:0px;line-height:17px;color:#111;">范围</span>
    <svg style="left:202px;top:0.500px;" width="9" height="12" viewBox="0 0 9 12"><path d="M1.500 5 L4.500 2 L7.500 5 M1.500 10 L4.500 7 L7.500 10" stroke="#111" stroke-width="1.500" fill="none"/></svg></div>
  <div class="row" style="top:141px;height:20px;background:#fff;border-bottom:1px dotted #777;"><span style="left:10px;top:-0.500px;line-height:18px;color:#111;">范围框</span>
     <div style="left:102px;top:0;width:115px;height:20px;border:1px solid #111;border-top-width:2px;"></div><span style="left:105px;top:-0.500px;line-height:18px;color:#111;">无</span></div>
  <div class="row" style="top:161px;height:20px;background:#dcdcdc;"><span style="left:2px;top:0px;line-height:18px;color:#111;">标识数据</span></div>
  <div class="row" style="top:181px;height:20px;background:#fff;border-bottom:1px dotted #777;"><span style="left:10px;top:-0.500px;line-height:18px;color:#111;">名称</span>
     <div style="left:102px;top:0;width:1px;height:19px;border-left:1px dotted #777;"></div><span style="left:105px;top:-0.500px;line-height:18px;color:#111;">E1</span></div>
  <!-- footer -->
  <a style="left:7px;top:299px;height:16px;line-height:16px;color:#1b4fc4;text-decoration:underline;">属性帮助</a>
  <div style="left:146px;top:298px;width:73px;height:19px;border:1px solid #adadad;border-radius:3px;background:#f4f4f4;text-align:center;line-height:18px;color:#9a9a9a;"><span style="position:static;">应用</span></div>
  <!-- Project browser -->
  <div class="ptl" style="top:325px;"><span style="left:4px;top:0;">项目浏览器 - 项目1</span>
    <svg style="left:205px;top:5px;" width="9" height="9" viewBox="0 0 9 9"><path d="M1 1 L8 8 M8 1 L1 8" stroke="#111" stroke-width="1.8" fill="none"/></svg></div>
  <div style="left:3px;top:344px;width:219px;height:2px;background:#787878;"></div>
  <div style="left:5px;top:346px;width:217px;height:223px;background:#fff;"></div>
  <div id="tree" style="left:0;top:346px;width:222px;height:223px;"><div style="left:44px;top:2px;width:55px;height:19px;background:#e2e2e2;"></div><svg style="left:0;top:0;" width="222" height="223" viewBox="0 0 222 223"><g stroke="#9a9a9a" stroke-width="1" stroke-dasharray="1 1" fill="none"><path d="M13.5 16V191"/><path d="M33.500 21V71"/><path d="M18 11.500h6"/><path d="M38 31.5h10"/><path d="M38 51.5h10"/><path d="M38 71.5h10"/><path d="M14 91.5h10"/><path d="M14 111.5h10"/><path d="M14 131.5h10"/><path d="M18 151.5h6"/><path d="M18 171.5h6"/><path d="M14 191.5h10"/></g><rect x="9.0" y="7.0" width="8" height="8" rx="1" fill="#fafafa" stroke="#9a9a9a" transform="translate(0.500 0.500)"/><path d="M11.0 11.5h5" stroke="#2a3f9c" stroke-width="1"/><rect x="29.0" y="27.0" width="8" height="8" rx="1" fill="#fafafa" stroke="#9a9a9a" transform="translate(0.500 0.500)"/><path d="M31.0 31.5h5M33.5 29.0v5" stroke="#2a3f9c" stroke-width="1"/><rect x="29.0" y="47.0" width="8" height="8" rx="1" fill="#fafafa" stroke="#9a9a9a" transform="translate(0.500 0.500)"/><path d="M31.0 51.5h5M33.5 49.0v5" stroke="#2a3f9c" stroke-width="1"/><rect x="29.0" y="67.0" width="8" height="8" rx="1" fill="#fafafa" stroke="#9a9a9a" transform="translate(0.500 0.500)"/><path d="M31.0 71.5h5M33.5 69.0v5" stroke="#2a3f9c" stroke-width="1"/><rect x="9.0" y="147.0" width="8" height="8" rx="1" fill="#fafafa" stroke="#9a9a9a" transform="translate(0.500 0.500)"/><path d="M11.0 151.5h5M13.5 149.0v5" stroke="#2a3f9c" stroke-width="1"/><rect x="9.0" y="167.0" width="8" height="8" rx="1" fill="#fafafa" stroke="#9a9a9a" transform="translate(0.500 0.500)"/><path d="M11.0 171.5h5M13.5 169.0v5" stroke="#2a3f9c" stroke-width="1"/><g fill="none" stroke="#333" stroke-width="1.300"><path d="M29 5.500h-2.500v3M37 5.500h2.500v3M29 17.500h-2.500v-3M37 17.500h2.500v-3"/><path d="M30 8.500h6.500l-1 6.500h-6.500z" fill="#eee" stroke="#555"/></g><g><rect x="25.500" y="84.5" width="15" height="14" rx="1" fill="#f4f4f4" stroke="#444" stroke-width="1.200"/><rect x="25.500" y="84.5" width="15" height="3" fill="#555"/><rect x="28" y="89.0" width="3" height="2.500" fill="#666"/><path d="M32.500 90.0h6M32.500 92.5h6M32.500 95.0h6" stroke="#777"/><circle cx="29.500" cy="95.0" r="1.500" fill="#666"/></g><g><rect x="25.500" y="105.5" width="14" height="12" rx="1" fill="#f4f4f4" stroke="#444" stroke-width="1.200"/><rect x="25.500" y="105.5" width="14" height="3" fill="#555"/><path d="M26 112.0h13M26 115.0h13M30.500 108.5v9" stroke="#888"/></g><g fill="none"><path d="M25.500 125.0h11l3.500 3.500v9.500h-14.500z" fill="#f6f6f6" stroke="#444" stroke-width="1.200"/><path d="M28 135.5v-6h8v6M28 132.5h4v3" stroke="#777"/><path d="M36.500 125.0v3.500h3.500" stroke="#444"/></g><g fill="none"><path d="M26.500 145.0h6v6h-6zM35.500 145.0h4v13h-13v-4h9z" fill="#f4f4f4" stroke="#444" stroke-width="1.200"/></g><g fill="none" stroke="#333" stroke-width="1.300"><path d="M29 164.5h-2.500v14h2.500M37 164.5h2.500v14h-2.500"/><circle cx="32" cy="170.5" r="3.500" fill="#ddd" stroke="#555" stroke-width="1"/><rect x="31" y="170.0" width="6" height="5.500" rx="1" fill="#eee" stroke="#555" stroke-width="1"/></g><g fill="none" stroke="#d89a10" stroke-width="2"><rect x="26" y="189.0" width="8" height="5.500" rx="2.700"/><rect x="32" y="189.0" width="8" height="5.500" rx="2.700"/></g><path d="M29.500 191.8h7" stroke="#8a5a00" stroke-width="1"/></svg><span class="tl" style="left:47px;top:3px;">视图 (all)</span><span class="tl" style="left:51px;top:23px;">楼层平面 (Floor Plan)</span><span class="tl" style="left:51px;top:43px;">天花板平面 (Ceiling Plan)</span><span class="tl" style="left:51px;top:63px;">立面 (Building Elevation)</span><span class="tl" style="left:47px;top:83px;">图例</span><span class="tl" style="left:47px;top:103px;">明细表/数量</span><span class="tl" style="left:47px;top:123px;">图纸 (all)</span><span class="tl" style="left:47px;top:143px;">族</span><span class="tl" style="left:47px;top:163px;">组</span><span class="tl" style="left:47px;top:183px;">Revit 链接</span></div>
  <!-- splitter -->
  <div style="left:223px;top:0px;width:5px;height:569px;background:#ececec;"></div>
  <div style="left:222px;top:20px;width:1px;height:549px;background:#dadada;"></div>
  <div style="left:228px;top:0px;width:1px;height:569px;background:#7a7a7a;"></div>
</div>

<!-- EDIT GROUP floating panel -->
<div id="egrp" style="left:228px;top:172px;width:207px;height:95px;background:#f5f5f5;box-shadow:inset 1px 1px 0 #c4c4c4;border-right:1px solid #cfcfcf;border-bottom:1px solid #cfcfcf;">
  <div style="left:0;top:76px;width:206px;height:18px;background:#fcf8e3;"></div>
  <span style="left:84px;top:78px;height:16px;line-height:16px;color:#444;">编辑组</span>
  <div style="left:122px;top:4px;width:1px;height:70px;background:#d4d4d4;"></div>
  <span class="rl" style="left:10px;top:41px;">添加</span>
  <span class="rl" style="left:48px;top:41px;">删除</span>
  <span class="rl" style="left:86px;top:41px;">附着</span>
  <span class="rl" style="left:135px;top:41px;">完成</span>
  <span class="rl" style="left:173px;top:41px;">取消</span>
  <svg id="egicons" style="left:0;top:0;" width="206" height="94" viewBox="0 0 206 94"><defs><linearGradient id="gck" x1="0" y1="0" x2="0" y2="1"><stop offset="0" stop-color="#7fbf4a"/><stop offset="1" stop-color="#4c8c22"/></linearGradient><linearGradient id="gcx" x1="0" y1="0" x2="0" y2="1"><stop offset="0" stop-color="#f47a74"/><stop offset="1" stop-color="#ee5a56"/></linearGradient><radialGradient id="gsp" cx="0.350" cy="0.300" r="0.800"><stop offset="0" stop-color="#ffffff"/><stop offset="1" stop-color="#c9ced6"/></radialGradient><linearGradient id="gcb" x1="0" y1="0" x2="1" y2="1"><stop offset="0" stop-color="#86bfe2"/><stop offset="1" stop-color="#c0dff2"/></linearGradient></defs><g stroke="#3a4250" stroke-width="1.400" fill="none"><path d="M11.7 7.500h-4.500v28h4.500M31 7.500h4.500v28h-4.500"/></g><circle cx="18.9" cy="17" r="6.700" fill="url(#gsp)" stroke="#3c4450" stroke-width="1.100"/><g stroke="#1c6fc8" stroke-width="1.100" stroke-linejoin="round"><path d="M19 21.200l3-3h10.500v10.500l-3 3h-10.500z" fill="#d4eaf7"/><path d="M19 21.200h10.500v10.500h-10.500z" fill="url(#gcb)"/><path d="M29.5 21.200l3-3v10.500l-3 3z" fill="#8cc0e0"/></g><path d="M10 27.900h10.800M15.4 22.500v10.800" stroke="#0a7a0a" stroke-width="3.600"/><path d="M10.5 27.900h9.800M15.4 23v9.800" stroke="#14b414" stroke-width="2.400"/><g stroke="#3a4250" stroke-width="1.400" fill="none"><path d="M49.899 7.500h-4.500v28h4.500M69.199 7.500h4.500v28h-4.500"/></g><circle cx="57.099" cy="17" r="6.700" fill="url(#gsp)" stroke="#3c4450" stroke-width="1.100"/><g stroke="#1c6fc8" stroke-width="1.100" stroke-linejoin="round"><path d="M57.199 21.200l3-3h10.500v10.500l-3 3h-10.500z" fill="#d4eaf7"/><path d="M57.199 21.200h10.500v10.500h-10.500z" fill="url(#gcb)"/><path d="M67.699 21.200l3-3v10.500l-3 3z" fill="#8cc0e0"/></g><path d="M47.999 28.100h10.800" stroke="#b00c0c" stroke-width="3.400"/><path d="M48.399 28.100h10" stroke="#ee2020" stroke-width="2"/><g fill="none" stroke-linecap="round"><path d="M105.200 8V28.300a7.300 7.300 0 0 1 -14.600 0V10a2.300 2.300 0 0 1 2.300 -2.300H100a2.300 2.300 0 0 1 2.300 2.300V20.500a3.300 3.300 0 0 1 -6.600 0V13" stroke="#3d4551" stroke-width="2.700"/><path d="M105.200 8V28.300a7.300 7.300 0 0 1 -14.600 0V10a2.300 2.300 0 0 1 2.300 -2.300H100a2.300 2.300 0 0 1 2.300 2.300V20.500a3.300 3.300 0 0 1 -6.600 0V13" stroke="#eef0f2" stroke-width="1.100"/></g><path d="M136.500 23l3.500-3.500l4 4.500l10.500-11l3 3l-13.500 14.500z" fill="url(#gck)" stroke="#3f7a1a" stroke-width="0.900" stroke-linejoin="round"/><g stroke-linecap="round" fill="none"><path d="M176.300 13.300l17 17M193.300 13.300l-17 17" stroke="#d53c38" stroke-width="5"/><path d="M176.300 13.300l17 17M193.300 13.300l-17 17" stroke="#f78a84" stroke-width="3.200"/></g></svg>
</div>
<div style="left:435px;top:172px;width:985px;height:2px;background:#6f6f6f;"></div>
<!-- TOOLTIP -->
<div id="tip" style="left:180px;top:304px;width:232px;height:88px;border:1px solid #8f8f8f;border-radius:4px;background:linear-gradient(#ffffff 0%,#f3f4f9 45%,#e4e6f1 100%);box-shadow:1px 1px 2px rgba(0,0,0,0.250);">
  <span style="left:7px;top:8px;height:16px;line-height:16px;color:#4c4c4c;">编辑类型</span>
  <span style="left:7px;top:30px;height:16px;line-height:16px;color:#575757;">用于显示选定图元所属的族类型的属性。</span>
  <div style="left:1px;top:55px;width:228px;height:1px;background:#bfbfc8;"></div>
  <span style="left:7px;top:63px;height:16px;line-height:16px;color:#4c4c4c;font-weight:bold;">按 F1 键获得更多帮助</span>
</div>
<!-- RED ANNOTATIONS -->
<svg id="anno" style="left:0;top:0;" width="1420" height="741" viewBox="0 0 1420 741">
  <g filter="url(#sh)" fill="none" stroke="#fb0505">
    <rect x="830.600" y="195.500" width="459.900" height="52.900" stroke-width="3.300"/>
    <rect x="145.900" y="257.700" width="96" height="35.400" stroke-width="3.500"/>
    <path d="M817.500 232.600L270 273.300" stroke-width="3.200" stroke-linecap="round"/>
    <path d="M253.500 274.300L279.500 266.300Q276 273 280 279.500Z" fill="#fb0505" stroke-width="1" stroke-linejoin="round"/>
  </g>
</svg>
<!-- WATERMARKS -->
<div id="wm" style="left:1085px;top:585px;width:335px;height:156px;">
  <span style="left:5px;top:33px;height:56px;line-height:56px;font-size:58px;font-weight:bold;color:#fffef6;letter-spacing:-1px;text-shadow:0 0 2px #cfccb4,1px 1px 2px #d2cfb8,-1px -1px 1px #e6e3cd;">Bai</span>
  <span style="left:167px;top:38px;height:48px;line-height:48px;font-size:42px;font-weight:bold;color:#fffef6;text-shadow:0 0 2px #cfccb4,1px 1px 2px #d2cfb8,-1px -1px 1px #e6e3cd;">经验</span>
  <span style="left:4px;top:88px;height:40px;line-height:40px;font-size:33px;color:#fffef6;text-shadow:0 0 2px #cfccb4,1px 1px 2px #d2cfb8,-1px -1px 1px #e6e3cd;">jingyan.b</span>
  <svg style="left:84px;top:1px;" width="80" height="90" viewBox="0 0 80 90">
    <g fill="#fffef6" stroke="#d9d6bf" stroke-width="1.200">
      <ellipse cx="18" cy="33" rx="9" ry="12" transform="rotate(-15 18 33)"/>
      <ellipse cx="37" cy="17" rx="9" ry="12.500"/>
      <ellipse cx="58" cy="20" rx="9" ry="12.500" transform="rotate(10 58 20)"/>
      <ellipse cx="72" cy="42" rx="8" ry="11.500" transform="rotate(20 72 42)"/>
      <path d="M41 36C52 36 58 47 66 56C74 66 70 79 57 80C48 80.500 45 79 40 79C34 79 29 81 22 80C10 78 9 66 16 57C24 47 30 36 41 36Z"/>
    </g>
    <text x="21" y="74" font-family="Liberation Sans, sans-serif" font-weight="bold" font-size="30" fill="#f3f0dc" letter-spacing="-1">du</text>
  </svg>
</div>
<div id="banner" style="left:1213px;top:661px;width:207px;height:80px;background:radial-gradient(ellipse 70% 75% at 50% 48%,#a9cdf3 0%,#9dc0ec 45%,rgba(120,160,215,0) 100%),linear-gradient(#97dce8 0%,#9ad3ec 22%,#8fb4e6 55%,#5c86c8 80%,#2f5598 100%);">
  <span style="left:28px;top:4.500px;height:40px;line-height:40px;font-size:31.500px;font-weight:900;font-family:'Noto Sans CJK SC',sans-serif;background:linear-gradient(90deg,#18a2ad 0%,#1fa58a 25%,#2aa64e 55%,#2aa452 75%,#1f9fcb 100%);-webkit-background-clip:text;background-clip:text;color:transparent;">我爱学教程</span>
  <span style="left:34px;top:47px;height:26px;line-height:26px;font-size:21px;letter-spacing:-1px;font-weight:bold;color:#27a760;">www.52xjc.com</span>
</div>
</body>
</html>
